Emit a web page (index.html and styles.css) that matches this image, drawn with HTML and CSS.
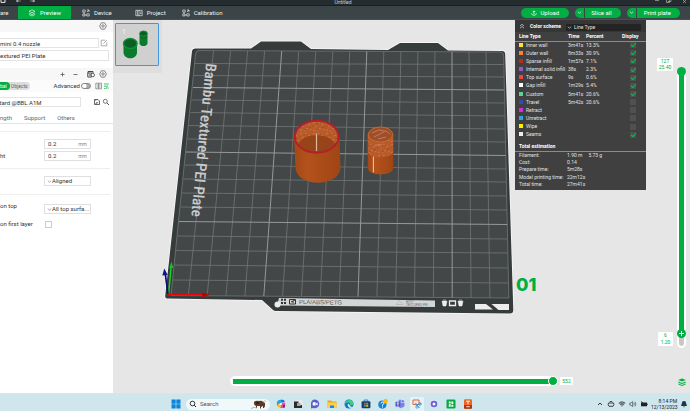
FILE: index.html
```html
<!DOCTYPE html>
<html lang="en">
<head>
<meta charset="utf-8">
<title>Untitled</title>
<meta name="viewport" content="width=device-width, initial-scale=1">
<link rel="stylesheet" href="styles.css">
</head>
<body>
<svg width="0" height="0" class="defs" aria-hidden="true">
  <symbol id="gear" viewBox="0 0 8 8"><path d="M2.4 .8h3.2L7.4 4 5.6 7.2H2.4L.6 4z" fill="none" stroke="#6b6b6b" stroke-width=".8"/><circle cx="4" cy="4" r="1.2" fill="none" stroke="#6b6b6b" stroke-width=".8"/></symbol>
  <symbol id="chev" viewBox="0 0 5 5"><path d="M.8 1.7l1.7 1.5 1.7-1.5" fill="none" stroke="currentColor" stroke-width=".7"/></symbol>
  <symbol id="nodes" viewBox="0 0 8 8"><path d="M.8 1h2.4v2.2H.8zM4.8 4.8h2.4V7H4.8zM.8 5h2v2h-2zM5 3l2-2M5 1h2v2M2 3.2V5M3 6h1.8" fill="none" stroke="#dfe3e3" stroke-width=".7"/></symbol>
</svg>

<header class="titlebar">
  <svg class="title-left" viewBox="0 0 40 6"><path d="M1 0v2.4h4V0" fill="none" stroke="#e8eaea"/><path d="M16 1l2-1v2zM17 1h4M35 1l-2-1v2zM34 1h-4" stroke="#a9b0b1" stroke-width=".6" fill="#a9b0b1"/></svg>
  <span class="doc-name">Untitled</span>
  <svg class="title-right" viewBox="0 0 36 6"><path d="M1 .5h4M12.500 0v2.500h3V0M14 2.500v-1h3V0M29 3l3-3M29 0l3 3" fill="none" stroke="#aab0b2" stroke-width=".7"/></svg>
</header>

<nav class="toolbar">
  <a class="tab tab-first" href="#">are</a>
  <a class="tab tab-active" href="#"><svg viewBox="0 0 8 8"><path d="M4 .8L7 2.300 4 3.800 1 2.300zM1 4l3 1.500L7 4M1 5.500L4 7l3-1.500" fill="none" stroke="#c9efd4" stroke-width=".8"/></svg>Preview</a>
  <a class="tab tab-device" href="#"><svg><use href="#nodes"/></svg>Device</a>
  <a class="tab tab-project" href="#"><svg viewBox="0 0 8 8"><path d="M.8 1.300h6.400v5.400H.8zM4 1v6M5 3h1.500M5 4.500h1.500M2.400 1.300v5.400" fill="none" stroke="#dfe3e3" stroke-width=".7"/></svg>Project</a>
  <a class="tab tab-calib" href="#"><svg><use href="#nodes"/></svg>Calibration</a>
  <div class="actions">
    <button class="pill upload"><svg viewBox="0 0 6 6"><path d="M3 4V1M1.800 2L3 .8 4.200 2M.6 3.400C.6 5.800 5.400 5.800 5.400 3.400" fill="none" stroke="#fff" stroke-width=".8"/></svg>Upload</button>
    <div class="split"><button class="pill drop" aria-label="Slice options"><svg><use href="#chev"/></svg></button><button class="pill slice">Slice all</button></div>
    <div class="split"><button class="pill drop" aria-label="Print options"><svg><use href="#chev"/></svg></button><button class="pill print">Print plate</button></div>
  </div>
</nav>

<main class="workspace">
  <aside class="panel">
    <div class="section-head"><svg class="i8"><use href="#gear"/></svg></div>
    <div class="field-row printer">
      <input class="box" aria-label="Printer" value="mini 0.4 nozzle">
      <svg class="i8" viewBox="0 0 8 8"><path d="M5.200 1.200H1.200v5.600h5.600V3.500M3.500 4.500l3.300-3.300" fill="none" stroke="#999" stroke-width=".8"/></svg>
    </div>
    <div class="field-row plate"><input class="box" aria-label="Plate type" value="extured PEI Plate"></div>
    <div class="section-head filament">
      <svg class="i5" viewBox="0 0 5 5"><path d="M2.500 .5v4M.5 2.500h4" stroke="#555" stroke-width=".8"/></svg>
      <svg class="i5" viewBox="0 0 5 5"><path d="M.5 2.500h4" stroke="#555" stroke-width=".8"/></svg>
      <svg class="i8 gap-l" viewBox="0 0 8 8"><path d="M1 3V1.500h5V3M.8 3h4v4h-4zM2 5h2" fill="none" stroke="#444"/><circle cx="5.800" cy="5" r="1.700" fill="#fff" stroke="#444" stroke-width=".8"/></svg>
      <svg class="i8"><use href="#gear"/></svg>
    </div>
    <div class="mode-row">
      <div class="segmented"><button class="seg on">bal</button><button class="seg">Objects</button></div>
      <label class="advanced" for="adv">Advanced</label><input class="switch" type="checkbox" id="adv">
      <svg class="view-icons" viewBox="0 0 14 8"><path d="M.8 1.200h5.700v5.600H.8zM3.600 1v6M2 3h3.500M2 5h3.500" fill="none" stroke="#777" stroke-width=".7"/><path d="M9 2h2M9 4.200h4M9 6.500h1.500M12 1v2M11.800 5v2M13 2h.8M13 6h.8" stroke="#2dbb62" stroke-width=".9"/></svg>
    </div>
    <div class="field-row preset">
      <input class="box" aria-label="Process preset" value="dard @BBL A1M">
      <svg class="i8" viewBox="0 0 8 8"><path d="M1.500 1.500h3.500l1.500 1.500v3.500h-5zM3 6.500V4.800h2.200M2.800 1.500v1.300" fill="none" stroke="#444" stroke-width=".8"/></svg>
      <svg class="i8" viewBox="0 0 8 8"><circle cx="3.300" cy="3.300" r="2" fill="none" stroke="#555" stroke-width=".8"/><path d="M4.800 4.800L7 7" stroke="#555"/></svg>
    </div>
    <div class="subtabs"><a href="#">ngth</a><a href="#">Support</a><a href="#">Others</a></div>
    <div class="group g1">
      <div class="opt"><label for="lh"></label><span class="num"><input id="lh" aria-label="Layer height" value="0.2"><i>mm</i></span></div>
      <div class="opt"><label for="fh">ht</label><span class="num"><input id="fh" value="0.2"><i>mm</i></span></div>
    </div>
    <div class="group g2">
      <div class="opt"><label for="seam"></label><span class="pick"><svg><use href="#chev"/></svg><select id="seam" aria-label="Seam position"><option>Aligned</option></select></span></div>
    </div>
    <div class="group g3">
      <div class="opt"><label class="up" for="top">on top</label><span class="pick"><svg><use href="#chev"/></svg><select id="top"><option>All top surfa...</option></select></span></div>
      <div class="opt"><label for="fl">on first layer</label><input class="tick" type="checkbox" id="fl"></div>
    </div>
  </aside>

  <section class="viewport">
    <svg class="scene" viewBox="113 20 577 373" preserveAspectRatio="xMidYMid meet">
      <defs>
        <linearGradient id="body" x1="0" x2="1"><stop offset="0" stop-color="#a54816"/><stop offset=".3" stop-color="#b3521b"/><stop offset="1" stop-color="#9f4514"/></linearGradient>
        <pattern id="grain" width="13" height="11" patternUnits="userSpaceOnUse"><rect width="13" height="11" fill="#b85a29"/><path d="M1 2l2-.8M6 1l1.500.5M9 4l2-1M3 6l1.500-1M7 7.500l2 .4M11 9l1.500-.8M1 9.500l2-.5M5 10l1-.5" stroke="#d08a60" stroke-width=".6"/><path d="M4 3h2M0 5h1.500M10 6.500h2M5 8.500h1.500M8 2.500h1" stroke="#9c471b" stroke-width=".7"/></pattern>
      </defs>
      <path d="M195 48.500L251 48.500 261 41.500H301L311 49 388 50 400 43H438L448 50.500 502 51Q505 51 505.200 54L513.300 310Q513.300 313.500 510 313.500L276 311Q274 311 272.500 309.500L262 300 167 298.500Q165 298.500 165.200 296L192 51Q192.300 48.500 195 48.500Z" fill="#363b3c" stroke="#fafafa" stroke-width="1.500" paint-order="stroke"/>
      <path d="M199 50.500L500 52Q503.500 52 503.700 56L508.800 298 171 295.500 195.500 54Q196 50.500 199 50.500Z" fill="#444748"/>
      <g fill="none" stroke="#727676" stroke-width=".8">
        <path d="M213.500 51L188.400 295M230.600 51L207.200 295.500M247.600 51L226 295.500M264.600 51L244.900 296M298.700 51.500L282.600 296M315.700 51.500L301.500 296M332.800 51.500L320.300 296M349.800 51.500L339.200 296.500M383.800 51.500L376.900 296.500M400.900 51.500L395.700 297M417.900 52L414.500 297M434.900 52L433.400 297M469 52L471.100 297.500M486 52L489.900 298"/>
        <path d="M195 63.500L503.700 64.500M194 75.500L504 77M191.500 100L504.500 103M190.500 112.500L505 116M189 125.500L505 129M187.500 139L505.500 142M185 165L506 169M183.500 179L506 182M182 193L506.500 196M180.500 207L507 210M177.500 236L507.500 239M176 250.500L508 253M174.500 265L508 268M173 280L508.500 283"/>
        <path d="M199 50.500L500 52Q503.500 52 503.700 56L508.800 298 171 295.500 195.500 54Q196 50.500 199 50.500Z"/>
      </g>
      <path d="M281.700 51L263.800 296M366.800 51.500L358 296.500M452 52L452.200 297.500M193 87.500L504.300 90M186 152L505.700 155.500M179 221.500L507.300 224.500" stroke="#969998" stroke-width="1" fill="none"/>
      <text class="plate-name" transform="translate(206 63) rotate(95.500)">Bambu Textured PEI Plate</text>

      <path d="M279 298L435 300.500V307L277 305.500Z" fill="#d4d6d5"/>
      <circle cx="277.500" cy="304.500" r="3" fill="#eceded"/>
      <path d="M281 298.800h2v2h-2zM284 298.800h2v2h-2zM281 302h2v2h-2zM284 302h2v2h-2z" fill="#333"/>
      <path d="M289.500 299.500h6v4.500h-6zM291 302l2-1v2M293 301l2-1" fill="none" stroke="#333"/>
      <text class="plate-mat" transform="translate(299 304) rotate(.8)">PLA/ABS/PETG</text>
      <path d="M396 304.500l3.500-4 3.500 4z" fill="none" stroke="#aaa" stroke-width=".6"/>
      <text class="plate-warn" x="406" y="302.500">HOT!!</text><text class="plate-warn" x="406" y="305.500">TEXTURED PEI</text>
      <path d="M442 301h5l-1 5h-3zM443 300h3M458 301h5l-1 5h-3zM459 300h3" fill="#eee" stroke="#eee" stroke-width=".5"/>
      <path d="M449.500 301h6v4.500h-6z" fill="none" stroke="#eee" stroke-width="1.300"/>
      <path d="M475 304h11l7 5.500H475zM491.500 304H509v6H498.500z" fill="#ececec"/>
      <text class="plate-no" x="516" y="291">01</text>

      <path d="M168.500 295L171.200 266" stroke="#17d821" stroke-width="1.500"/><path d="M169.500 268l1.800-6.500 2 6.500z" fill="#11c41d"/>
      <path d="M168 294.800H204" stroke="#e00808" stroke-width="1.600"/><path d="M202 292.500l8.500 2.300-8.500 2.400z" fill="#b90404"/>
      <path d="M168 294L165.300 274" stroke="#0a1070" stroke-width="1.700"/><path d="M162.300 275.500L164.300 268.500 167.700 275z" fill="#0a1494"/>

      <path d="M294 137L295.500 168C297 187.500 339 187.500 340.500 168L339.500 137Z" fill="url(#body)"/>
      <ellipse cx="316.700" cy="136.700" rx="22" ry="16.200" fill="url(#grain)"/>
      <path d="M298 145C302 132 331 132 335.500 145C329 156 305 156 298 145Z" fill="#984419"/>
      <ellipse cx="316.700" cy="136.700" rx="21.800" ry="16" fill="none" stroke="#b3202b" stroke-width="2"/>
      <path d="M316.500 133.500V151" stroke="#ddb9a4" stroke-width="1.200"/>

      <path d="M367.800 134V168C368 176.500 393 176.500 393.200 168V134Z" fill="url(#body)"/>
      <path d="M367.800 134V152C369 159 392 159 393.200 152V134Z" fill="url(#grain)"/>
      <ellipse cx="380.500" cy="134.500" rx="12.200" ry="7.500" fill="#a04e2a" stroke="#c8692f"/>
      <path d="M372 133l7-3 8 1.500 3 3M374 137l10-5M378 139l8-2M375 145h7" fill="none" stroke="#d09a7a" stroke-width=".6"/>
      <path d="M373.400 156.500V172.500" stroke="#e0c3ae" stroke-width="1.100"/>
    </svg>

    <div class="plates"><button class="plate-thumb" aria-label="Plate 1">
      <svg viewBox="0 0 41 41"><text class="thumb-no" x="6" y="10">1</text>
        <path d="M7.500 20v9c1 7 12.500 7 13.500 0v-9z" fill="#0a7a2c"/><ellipse cx="14.300" cy="19.500" rx="6.800" ry="5" fill="#0b5f25" stroke="#11933a" stroke-width="1.400"/>
        <path d="M23.500 10v9.500c.8 3.400 7.200 3.400 8 0V10z" fill="#0a7a2c"/><ellipse cx="27.500" cy="9.500" rx="3.800" ry="2.500" fill="#0b5f25" stroke="#11873a"/><path d="M24 13q3.500 3 7.200 0" fill="none" stroke="#0a5f24" stroke-width=".8"/></svg>
    </button></div>

    <div class="legend">
      <div class="scheme"><svg class="fold" viewBox="0 0 6 6"><path d="M1 3l2-1.800L5 3M1 5.200l2-1.800 2 1.800" fill="none" stroke="#ddd" stroke-width=".7"/></svg>
        <label for="scheme">Color scheme</label>
        <span class="scheme-pick"><svg><use href="#chev"/></svg><select id="scheme"><option>Line Type</option></select></span></div>
      <table class="lines">
        <thead><tr><th class="c-name">Line Type</th><th class="c-time">Time</th><th class="c-pct">Percent</th><th>Display</th></tr></thead>
        <tbody>
          <tr><td><b class="sw s1"></b>Inner wall</td><td>3m41s</td><td>13.3%</td><td><input type="checkbox" aria-label="Inner wall" checked></td></tr>
          <tr><td><b class="sw s2"></b>Outer wall</td><td>8m33s</td><td>30.9%</td><td><input type="checkbox" aria-label="Outer wall" checked></td></tr>
          <tr><td><b class="sw s3"></b>Sparse infill</td><td>1m57s</td><td>7.1%</td><td><input type="checkbox" aria-label="Sparse infill" checked></td></tr>
          <tr><td><b class="sw s4"></b>Internal solid infill</td><td>38s</td><td>2.3%</td><td><input type="checkbox" aria-label="Internal solid infill" checked></td></tr>
          <tr><td><b class="sw s5"></b>Top surface</td><td>9s</td><td>0.6%</td><td><input type="checkbox" aria-label="Top surface" checked></td></tr>
          <tr><td><b class="sw s6"></b>Gap infill</td><td>1m29s</td><td>5.4%</td><td><input type="checkbox" aria-label="Gap infill" checked></td></tr>
          <tr><td><b class="sw s7"></b>Custom</td><td>5m41s</td><td>20.6%</td><td><input type="checkbox" aria-label="Custom" checked></td></tr>
          <tr><td><b class="sw s8"></b>Travel</td><td>5m42s</td><td>20.6%</td><td><input type="checkbox" aria-label="Travel"></td></tr>
          <tr><td><b class="sw s9"></b>Retract</td><td></td><td></td><td><input type="checkbox" aria-label="Retract"></td></tr>
          <tr><td><b class="sw s10"></b>Unretract</td><td></td><td></td><td><input type="checkbox" aria-label="Unretract"></td></tr>
          <tr><td><b class="sw s11"></b>Wipe</td><td></td><td></td><td><input type="checkbox" aria-label="Wipe"></td></tr>
          <tr><td><b class="sw s12"></b>Seams</td><td></td><td></td><td><input type="checkbox" aria-label="Seams" checked></td></tr>
        </tbody>
      </table>
      <h2>Total estimation</h2>
      <dl class="totals">
        <dt>Filament:</dt><dd><span>1.90 m</span><span>5.73 g</span></dd>
        <dt>Cost:</dt><dd>0.14</dd>
        <dt>Prepare time:</dt><dd>5m28s</dd>
        <dt>Model printing time:</dt><dd>22m12s</dd>
        <dt>Total time:</dt><dd>27m41s</dd>
      </dl>
    </div>

    <div class="layers">
      <output class="tip tip-top">127<br>25.40</output>
      <div class="vtrack">
        <input class="vrange hi" type="range" aria-label="Top layer" min="0" max="127" value="127">
        <input class="vrange lo" type="range" aria-label="Bottom layer" min="0" max="127" value="6">
      </div>
      <output class="tip tip-low">6<br>1.20</output>
      <svg class="stack" viewBox="0 0 8 8"><path d="M4 .5L7.800 2 4 3.500.2 2zM.4 3.400L4 5l3.600-1.600v1.300L4 6 .4 4.700zM.4 5.400L4 7l3.600-1.600v1L4 8 .4 6.400z" fill="#00ae42"/></svg>
    </div>

    <div class="moves">
      <input class="hrange" type="range" aria-label="Move" min="0" max="552" value="552">
      <output class="tip tip-move">552</output>
    </div>
  </section>
</main>

<footer class="taskbar">
  <div class="apps">
    <svg viewBox="0 0 10 10"><path d="M.5.500h4.200v4.200H.5zM5.300.500h4.200v4.200H5.300zM.5 5.300h4.200v4.200H.5zM5.300 5.300h4.200v4.200H5.300z" fill="#0a84dc"/></svg>
    <label class="search"><svg class="i8" viewBox="0 0 8 8"><circle cx="3.500" cy="3.500" r="2.300" fill="none" stroke="#222" stroke-width=".9"/><path d="M5.200 5.200L7 7" stroke="#222"/></svg>
      <input aria-label="Search" placeholder="Search">
      <svg class="ox" viewBox="0 0 16 10"><path d="M3 3q2-2 5-1 3-1 4 1l2 1v3l-1 2h-1V7l-2 1v1.500H9V7L6 7v2H5V7Q2.500 6 3 3z" fill="#5a3a24"/><path d="M0 9.500q3-2 6-.5M12 3q1.500-2 2.500-.5" stroke="#c49a7c" fill="none" stroke-width=".8"/><path d="M5 3h3v2H5z" fill="#3a2213"/></svg></label>
    <svg viewBox="0 0 10 10"><path d="M1 3q1-2.500 3.500-2.300L6 3 4 7H1.500Q.3 5.500 1 3z" fill="#20a6e0"/><path d="M4.500.700H7q1.500.3 1.700 2.300L6 3.500z" fill="#2764d8"/><path d="M1.500 5.500L5 4l-.5 4.500H3Q1.800 8 1.500 5.500z" fill="#f5c21b"/><path d="M9 3.500q1 3-1.500 5.500H4.200L6 4z" fill="#e84b9a"/><path d="M4 4h2l-.6 2H3.400z" fill="#fff"/><path d="M7 6h2v2.500H7z" fill="#6b2b63"/></svg>
    <svg viewBox="0 0 10 10"><path d="M3 1h6.500v6H3z" fill="#e9e9e9"/><path d="M1 2.500h4.500v3.500H9V9H1z" fill="#2b2b2b"/><path d="M4 4h3.500v3H4z" fill="#a7a7a7"/></svg>
    <svg viewBox="0 0 10 10"><path d="M5 .5A4.400 4.400 0 1 1 3 8.900L1 9.500V5A4.300 4.300 0 0 1 5 .5z" fill="#5b5fc7"/><rect x="2.700" y="3.300" width="3" height="3.200" rx=".5" fill="#fff"/><path d="M6 4.600l1.600-1v2.800L6 5.400z" fill="#fff"/></svg>
    <svg viewBox="0 0 10 10"><path d="M.5 1.500H4l1 1h4.500V9h-9z" fill="#e5a51b"/><path d="M.5 3.500h9V9h-9z" fill="#fbd04f"/><path d="M3 6.500h4V9H3z" fill="#1f86d8"/></svg>
    <svg viewBox="0 0 10 10"><circle cx="5" cy="5" r="4.500" fill="#1277c9"/><path d="M1 3.500Q3 .3 6.500.9 9.800 2 9.400 5.500 7.500 7 6 5.800 6.800 4 4.800 3.500 2.500 3 1 5z" fill="#3ecb8b"/><path d="M4.200 4.500q-1.400 2 1 4 2 1 3.600-.5Q6 8 5.500 5.800z" fill="#d8f2fb"/></svg>
    <svg viewBox="0 0 10 10"><path d="M3.200 2.500V1h3.600v1.500" fill="none" stroke="#1d6fb8" stroke-width=".8"/><rect x=".6" y="2.300" width="8.800" height="7" rx="1" fill="#173a6b"/><path d="M2.800 3.800h2v1.800h-2z" fill="#f25022"/><path d="M5.200 3.800h2v1.800h-2z" fill="#7fba00"/><path d="M2.800 6h2v1.800h-2z" fill="#00a4ef"/><path d="M5.200 6h2v1.800h-2z" fill="#ffb900"/></svg>
    <svg viewBox="0 0 10 10"><circle cx="4.400" cy="5.600" r="4.100" fill="#1483cf"/><path d="M3 4.500Q3.200 3 4.500 3T5.800 4.400Q5.600 5.400 4.500 5.800v1M4.500 7.500v1" fill="none" stroke="#fff" stroke-width="1"/><circle cx="7.500" cy="2.200" r="2.300" fill="#fdb913"/></svg>
    <svg viewBox="0 0 10 10"><circle cx="7.800" cy="2.300" r="1.300" fill="#7b83eb"/><circle cx="5" cy="1.900" r="1.500" fill="#7b83eb"/><path d="M4 3.800h5.500v3Q9 9 6.800 8.500 5 10 4 8z" fill="#7b83eb"/><rect x=".5" y="2.800" width="4.800" height="4.800" rx=".6" fill="#4b53bc"/><path d="M1.700 4h2.400M2.900 4v2.800" stroke="#fff" stroke-width=".8"/></svg>
    <span class="app-on"><svg viewBox="0 0 10 10"><path d="M1 1h6v4.500H1z" fill="#f7e9e2" stroke="#e2633b" stroke-width="1"/><path d="M3.500 4l4 5M9 4.500L4 6.500" stroke="#3c94d0" stroke-width="1"/><circle cx="8" cy="5" r="1.300" fill="none" stroke="#3c94d0" stroke-width=".8"/><circle cx="5" cy="8" r="1.200" fill="none" stroke="#3c94d0" stroke-width=".8"/></svg></span>
    <svg viewBox="0 0 10 10"><circle cx="5" cy="5" r="4.200" fill="#e4e2fb"/><circle cx="5" cy="5" r="2.400" fill="none" stroke="#6a60d8" stroke-width="1.800"/><circle cx="5" cy="5" r="1" fill="#fff"/></svg>
    <svg viewBox="0 0 10 10"><rect x=".5" y=".5" width="9" height="9" rx="1.200" fill="#09a83f"/><path d="M2.800 2.500h1.900v2H2.800zM5.400 2.500h1.900v2.800H5.400zM2.800 5.200h1.900v2.500H2.800zM5.400 6h1.900v1.700H5.400z" fill="#fff"/></svg>
    <svg viewBox="0 0 10 10"><rect x="1" y=".3" width="8" height="9.400" rx="1" fill="#ef6425"/><path d="M1 6h8v2.700q0 1-1 1H2q-1 0-1-1z" fill="#a93a15"/><path d="M3 2.200h4M5 2v3.500M3.300 7.700h3.400" stroke="#fff" stroke-width=".9"/></svg>
  </div>
  <div class="tray">
    <svg class="i8" viewBox="0 0 8 8"><path d="M2 5l2-2 2 2" fill="none" stroke="#222" stroke-width=".9"/></svg>
    <svg class="i8" viewBox="0 0 8 8"><path d="M1.500 3h5Q7.500 4.800 6 6.300H2Q.5 4.800 1.500 3zM2.500 2q1.500-1.300 3 0" fill="none" stroke="#333" stroke-width=".9"/></svg>
    <svg class="i8" viewBox="0 0 8 8"><path d="M.6 3Q4 .2 7.400 3L4 7z" fill="#8b989e"/><path d="M.8 3Q4 .4 7.200 3M2 4.500q2-1.500 4 0" fill="none" stroke="#34424a" stroke-width=".6"/></svg>
    <svg class="i8" viewBox="0 0 8 8"><path d="M.8 3h1.200l1.600-1.400v5L2 5.200H.8zM4.800 2.800q1 1.300 0 2.600M6 1.800q1.800 2.300 0 4.600" fill="none" stroke="#333" stroke-width=".6"/></svg>
    <svg class="i8" viewBox="0 0 8 8"><path d="M1 2.500h6v3.800H1z" fill="#222"/><path d="M1 1.500l2 1.500M7.300 3.700v1.400" stroke="#222" stroke-width=".8"/></svg>
    <time class="clock">8:14 PM<br>12/13/2023</time>
    <svg class="i8" viewBox="0 0 8 8"><path d="M4 1q2.200 0 2.200 2.400L7 6H1l.8-2.600Q1.800 1 4 1zM3 6.500h2L4 7.500z" fill="#1c3850"/></svg>
  </div>
</footer>
</body>
</html>
```
FILE: styles.css
```css
* { box-sizing: border-box; }
body { margin: 0; min-height: 100vh; display: flex; flex-direction: column; overflow: hidden; font: 6px/8px Roboto, "Noto Sans", sans-serif; color: #333; background: #e6e6e6; }
button, input, select { font: inherit; color: inherit; margin: 0; padding: 0; border: 0; background: none; appearance: none; border-radius: 0; min-width: 0; }
a { color: inherit; text-decoration: none; }
svg { display: block; flex: none; }
.defs { position: absolute; }
.i8 { width: 8px; height: 8px; }
.i5 { width: 5px; height: 5px; }

/* Title bar and main tabs */
.titlebar { height: 6px; display: flex; justify-content: space-between; background: #252c2f; border-bottom: 1px solid #1a2022; }
.title-left { width: 40px; height: 6px; }
.title-right { width: 36px; height: 6px; }
.doc-name { color: #ccd1d2; font-size: 5px; line-height: 5px; margin-right: 8px; }
.toolbar { height: 14px; display: flex; align-items: stretch; background: #3b4547; color: #eef0f0; border-bottom: 1px solid #465052; }
.tab { display: flex; align-items: center; gap: 4px; padding: 0 11px; }
.tab svg { width: 8px; height: 8px; }
.tab-first { width: 18px; padding: 0; }
.tab-active { background: #00ae42; padding: 0 10px; color: #fff; }
.tab-project { padding-left: 12px; }
.tab-calib { padding-left: 5px; }
.actions { margin-left: auto; padding-right: 10px; display: flex; align-items: center; gap: 6px; }
.split { display: flex; gap: 1px; }
.pill { height: 10px; padding: 0 10px; background: #00ae42; color: #fff; border-radius: 5px; line-height: 10px; }
.upload { display: flex; align-items: center; gap: 3px; padding: 0 10px; }
.upload svg { width: 6px; height: 6px; }
.drop { width: 9px; padding: 0 2px; border-radius: 5px 0 0 5px; }
.drop svg { width: 5px; height: 5px; }
.slice { border-radius: 0 5px 5px 0; padding: 0 9px 0 6px; }
.print { border-radius: 0 5px 5px 0; padding: 0 9px 0 7px; }

/* Settings panel */
.workspace { flex: 1; display: flex; min-height: 0; }
.panel { flex: none; width: 113px; background: #fff; overflow: hidden; display: flex; flex-direction: column; }
.section-head { height: 12px; background: #f7f7f7; display: flex; justify-content: flex-end; align-items: center; padding-right: 6px; }
.field-row { display: flex; align-items: center; padding-right: 4px; }
.box { flex: 1; height: 10px; border: 1px solid #e3e3e3; border-left: 0; }
.printer { margin-top: 6px; gap: 1px; padding-right: 5px; }
.plate { margin-top: 2px; }
.plate .box { height: 11px; }
.filament { margin-top: 7px; gap: 8px; }
.filament .gap-l { margin: 0 -4px 0 1px; }
.mode-row { display: flex; align-items: center; height: 12px; padding-right: 4px; background: #fbfbfb; }
.segmented { display: flex; height: 8px; border-radius: 0 4px 4px 0; background: #dcdcdc; font-size: 5px; line-height: 8px; color: #666; margin-right: auto; }
.seg { padding: 0 2px 0 1px; line-height: 8px; }
.seg.on { background: #00ae42; color: #fff; border-radius: 0 4px 4px 0; padding: 0 3px 0 0; }
.advanced { margin-right: 1px; }
.switch { width: 10px; height: 6px; border: 1px solid #888; border-radius: 3px; background: radial-gradient(circle at 2px 2px, #fff 2px, #aaa 3px); margin-right: 4px; }
.view-icons { width: 14px; height: 8px; }
.preset { margin-top: 5px; padding-right: 3px; }
.preset .box { margin-right: 12px; text-indent: -2px; }
.preset .i8 + .i8 { margin-left: 1px; }
.subtabs { display: flex; gap: 12px; height: 17px; align-items: center; padding-top: 5px; color: #666; border-bottom: 1px solid #e4e4e4; }
.group { border-top: 1px solid #eee; margin-right: 3px; display: flex; flex-direction: column; }
.g1 { margin-top: 7px; padding: 7px 0; gap: 2px; height: 37px; }
.g2 { padding-top: 7px; height: 26px; }
.g3 { padding-top: 9px; gap: 6px; }
.opt { display: flex; align-items: center; }
.opt label { width: 44px; white-space: nowrap; }
.opt .up { align-self: flex-start; margin-top: -2px; }
.num, .pick { display: flex; align-items: center; width: 47px; height: 10px; border: 1px solid #e0e0e0; padding: 0 3px; }
.num input { width: 30px; }
.num i { font: 5px/8px Roboto, sans-serif; color: #888; margin-left: auto; }
.pick { padding: 0 1px 0 2px; color: #333; }
.pick svg { width: 5px; height: 5px; color: #888; }
.pick select { flex: 1; }
.tick { width: 7px; height: 7px; border: 1px solid #ccc; margin-left: 1px; }

/* 3D preview */
.viewport { flex: 1; position: relative; background: #e6e6e6; min-height: 373px; }
.scene { position: absolute; inset: 0; width: 100%; height: 100%; }
.plate-name { font: 500 15px "Liberation Sans Narrow", "Roboto Condensed", sans-serif; fill: #c9cbcb; }
.plate-mat { font: 6px "Liberation Sans", sans-serif; fill: #555; }
.plate-warn { font: 3px "Liberation Sans", sans-serif; fill: #666; }
.plate-no { font: 800 18px Inter, "Open Sans", sans-serif; fill: #00ae42; }
.plates { position: absolute; left: 0; top: 0; width: 49px; height: 53px; padding: 3px 2px; background: #dedede; }
.plate-thumb { width: 44px; height: 43px; border: 1px solid #4097e0; border-radius: 1px; background: #d0d0d0; }
.plate-thumb svg { width: 41px; height: 41px; }
.thumb-no { font: 7px Roboto, sans-serif; fill: #f2f2f2; }

.legend { position: absolute; top: 0; right: 44px; width: 131px; height: 170px; background: #404040; color: #e2e2e2; font-size: 5px; line-height: 7px; }
.scheme { display: flex; align-items: center; height: 12px; padding: 0 5px 0 4px; background: #363636; font-weight: bold; color: #fff; }
.fold { width: 6px; height: 6px; margin-right: 5px; }
.scheme-pick { display: flex; align-items: center; margin-left: auto; width: 75px; height: 7px; background: #242424; margin-top: 2px; font-weight: normal; padding-left: 1px; color: #e2e2e2; }
.scheme-pick svg { width: 5px; height: 5px; margin-right: 2px; }
.scheme-pick select { flex: 1; }
.lines { width: 100%; height: 107px; border-collapse: collapse; table-layout: fixed; }
.lines th { height: 9px; padding: 0; text-align: left; color: #fff; border-bottom: 1px solid #8b8b8b; white-space: nowrap; }
.lines td { height: 8px; padding: 0; line-height: 7px; white-space: nowrap; }
.lines .c-name { width: 53px; padding-left: 4px; }
.lines .c-time { width: 18px; }
.lines .c-pct { width: 36px; }
.lines td:last-child { padding-left: 8px; }
.lines input { display: block; width: 6px; height: 6px; background: #505050; }
.lines input:checked::after { content: ""; display: block; width: 4px; height: 2px; margin: 1px; border: solid #00c04a; border-width: 0 0 1px 1px; transform: rotate(-45deg); }
.sw { display: inline-block; width: 4px; height: 4px; margin: 0 3px 0 4px; }
.s1 { background: #ffe13a; } .s2 { background: #ff7d38; } .s3 { background: #ae3022; } .s4 { background: #9955cf; }
.s5 { background: #f04545; } .s6 { background: #fff; } .s7 { background: #5ed194; } .s8 { background: #3849a8; }
.s9 { background: #d62bd6; } .s10 { background: #38a0e0; } .s11 { background: #fff000; } .s12 { background: #eee; }
.legend h2 { font: bold 5px/8px Roboto, sans-serif; color: #fff; margin: 3px 0 0; padding: 0 4px 1px; border-bottom: 1px solid #8b8b8b; }
.totals { display: grid; grid-template-columns: 48px 1fr; height: 36px; margin: 0; padding-left: 4px; white-space: nowrap; }
.totals dd { margin: 0; display: flex; gap: 6px; }

/* Layer and move sliders */
.tip { background: #fff; color: #00ae42; font-size: 5px; line-height: 6px; text-align: center; border-radius: 1px; }
.layers { position: absolute; right: 4px; top: 47px; bottom: 7px; width: 29px; }
.vtrack { position: absolute; right: 0; top: 0; width: 9px; height: 281px; border-radius: 5px; border: 2px solid #fff; background: linear-gradient(#00ae42 0 266px, #c8c8c8 266px) content-box #fff; }
.vrange { position: absolute; left: -2px; top: -2px; width: 9px; height: 269px; writing-mode: vertical-lr; direction: rtl; pointer-events: none; }
.vrange.lo { top: 9px; height: 272px; }
.vrange::-webkit-slider-thumb { appearance: none; width: 9px; height: 9px; border-radius: 50%; background: #00ae42; border: 0; }
.vrange.lo::-webkit-slider-thumb { background: linear-gradient(#fff, #fff) center / 5px 1px no-repeat, linear-gradient(#fff, #fff) center / 1px 5px no-repeat, #00ae42; }
.tip-top { position: absolute; right: 13px; top: -9px; width: 16px; height: 13px; }
.tip-low { position: absolute; right: 13px; top: 265px; width: 15px; height: 14px; line-height: 7px; }
.stack { position: absolute; right: 0; bottom: 0; width: 8px; height: 8px; }
.moves { position: absolute; left: 117px; right: 117px; bottom: 7px; display: flex; align-items: center; gap: 2px; }
.hrange { flex: 1; height: 10px; border-radius: 5px; background: linear-gradient(#00ae42, #00ae42) 3px center / calc(100% - 12px) 5px no-repeat #fff; }
.hrange::-webkit-slider-thumb { appearance: none; width: 10px; height: 10px; border-radius: 50%; background: #00ae42; border: 1px solid #fff; }
.tip-move { width: 13px; height: 8px; line-height: 8px; }

/* Windows taskbar */
.taskbar { height: 18px; background: #cfe6ec; border-top: 1px solid #dbe3e5; display: flex; align-items: center; justify-content: space-between; padding: 3px 2px 0 171px; }
.apps { display: flex; align-items: center; gap: 7px; }
.apps > svg, .app-on svg { width: 10px; height: 10px; }
.search { display: flex; align-items: center; width: 84px; height: 11px; margin: 0 -1px 0 -2px; padding: 0 3px; border-radius: 6px; background: #f0f8fa; color: #555; }
.search input { flex: 1; margin-left: 3px; }
.search input::placeholder { color: #555; opacity: 1; }
.ox { width: 16px; height: 10px; }
.app-on { margin: -2px; padding: 2px; background: #e4f1f5; border-bottom: 1px solid #5b90a8; }
.tray { display: flex; align-items: center; gap: 3px; }
.clock { font-size: 5px; line-height: 6px; text-align: right; width: 26px; color: #222; }
```
